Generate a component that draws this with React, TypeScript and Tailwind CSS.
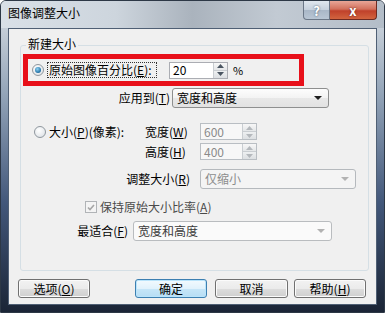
import type { ReactNode } from 'react';
import clsx from 'clsx';

const font = { fontFamily: '"Noto Sans CJK SC", "Noto Sans", sans-serif' };

function Spinner({ disabled }: { disabled?: boolean }) {
  const fill = disabled ? '#b4b8bc' : '#4a5561';
  return (
    <div className="flex h-full w-[14px] flex-col border-l border-[#c9cdd1]">
      <div className="flex flex-1 items-center justify-center border-b border-[#c9cdd1] bg-[linear-gradient(#f7f7f7,#e4e6e8)]">
        <svg width="7" height="4" viewBox="0 0 7 4">
          <path d="M0 4L3.5 0L7 4Z" fill={fill} />
        </svg>
      </div>
      <div className="flex flex-1 items-center justify-center bg-[linear-gradient(#eef0f1,#dcdfe2)]">
        <svg width="7" height="4" viewBox="0 0 7 4">
          <path d="M0 0L3.5 4L7 0Z" fill={fill} />
        </svg>
      </div>
    </div>
  );
}

function NumberBox({ value, disabled, width }: { value: string; disabled?: boolean; width: number }) {
  return (
    <div
      className={clsx(
        'flex h-[17px] border',
        disabled ? 'border-[#b9bec3] bg-[#f7f7f7] text-[#8a8a8a]' : 'border-[#abadb3] bg-white text-black'
      )}
      style={{ width }}
    >
      <div className="flex flex-1 items-center pl-[3px] text-[12px] leading-none">{value}</div>
      <Spinner disabled={disabled} />
    </div>
  );
}

function Combo({ text, width, disabled, dim }: { text: string; width: number; disabled?: boolean; dim?: boolean }) {
  return (
    <div
      className={clsx(
        'flex h-[20px] items-center justify-between rounded-[3px] border pl-[4px] pr-[6px] text-[12px] leading-none',
        disabled
          ? 'border-[#b5b9bd] bg-[#f4f4f4] text-[#8c8c8c]'
          : dim
            ? 'border-[#b9bcbf] bg-[#fafafa] text-[#3a3a3a]'
            : 'border-[#8e8f8f] bg-[linear-gradient(#fdfdfd_0%,#f3f3f3_50%,#e8e8e8_51%,#e2e2e2_100%)] text-black'
      )}
      style={{ width }}
    >
      <span>{text}</span>
      <svg width="8" height="4" viewBox="0 0 8 4">
        <path d="M0 0L4 4L8 0Z" fill={disabled || dim ? '#b2b2b2' : '#1e1e1e'} />
      </svg>
    </div>
  );
}

function Radio({ checked }: { checked?: boolean }) {
  return (
    <div className="flex h-[12px] w-[12px] items-center justify-center rounded-full border border-[#8f979e] bg-[radial-gradient(circle_at_40%_35%,#ffffff,#d8dde2)]">
      {checked && (
        <div className="h-[6px] w-[6px] rounded-full bg-[radial-gradient(circle_at_40%_35%,#8fd3f5,#1f6fa3_70%,#0d4a78)]" />
      )}
    </div>
  );
}

function Key({ k }: { k: string }) {
  return (
    <>
      (<span className="underline">{k}</span>)
    </>
  );
}

function Button({ children, primary, width }: { children: ReactNode; primary?: boolean; width: number }) {
  return (
    <div
      className={clsx(
        'flex h-[19px] items-center justify-center rounded-[3px] border text-[12px] leading-none text-black',
        primary
          ? 'border-[#3c7fb1] bg-[linear-gradient(#f2fafe_0%,#e1f2fc_50%,#c6e6f8_51%,#b7ddf4_100%)] shadow-[inset_0_0_0_1px_#b9e4fb]'
          : 'border-[#707070] bg-[linear-gradient(#f2f2f2_0%,#ebebeb_50%,#dddddd_51%,#cfcfcf_100%)] shadow-[inset_0_0_0_1px_#fbfbfb]'
      )}
      style={{ width }}
    >
      {children}
    </div>
  );
}

export default function App() {
  return (
    <div
      className="flex h-[313px] w-[385px] flex-col overflow-hidden rounded-t-[6px] border border-[#2d3846] bg-[linear-gradient(180deg,#dbe2e9_0%,#c4cdd7_9%,#93a4b8_30%,#42577a_65%,#1b2536_100%)]"
      style={font}
    >
      {/* title bar */}
      <div className="flex h-[27px] items-start justify-between bg-[linear-gradient(90deg,#d9e0e7_0%,#cdd5dd_30%,#aab3bd_50%,#c2cad3_72%,#b3bdc8_100%)]">
        <div className="pl-[7px] pt-[6px] text-[12px] leading-none text-black">图像调整大小</div>
        <div className="mr-[7px] flex h-[19px]">
          <div className="flex w-[27px] items-center justify-center rounded-bl-[4px] border border-t-0 border-[#6b7787] bg-[linear-gradient(#dfe6ee_0%,#c5d0dc_50%,#a9b7c7_51%,#b9c6d4_100%)] text-[13px] font-bold leading-none text-white [text-shadow:0_0_2px_#3b4b5e]">
            ?
          </div>
          <div className="flex w-[47px] items-center justify-center rounded-br-[4px] border border-l-0 border-t-0 border-[#6d2a22] bg-[linear-gradient(#e8a697_0%,#d2705c_45%,#c0412b_55%,#d2643f_100%)] text-[13px] font-bold leading-none text-white [text-shadow:0_0_2px_#5b1a10]">
            x
          </div>
        </div>
      </div>

      {/* client area */}
      <div className="mx-[7px] h-[277px] border border-[#4f5f74] bg-[#f0f0f0] text-[12px] leading-none text-black">
        {/* group box */}
        <div className="relative ml-[11px] mt-[16px] h-[226px] w-[349px] rounded-[3px] border border-[#d5dfe5]">
          <span className="absolute left-[5px] top-[-8px] bg-[#f0f0f0] px-[2px] text-[12px] leading-none">新建大小</span>

          {/* row 1 */}
          <div className="ml-[2px] mt-[8px] flex h-[32px] w-[281px] items-center border-[5px] border-[#e8101a]">
            <div className="ml-[4px]">
              <Radio checked />
            </div>
            <div className="ml-[3px] flex h-[16px] w-[110px] items-center border border-dotted border-[#333] pl-[1px]">
              原始图像百分比<Key k="E" />:
            </div>
            <div className="ml-[12px]">
              <NumberBox value="20" width={59} />
            </div>
            <span className="ml-[5px] text-[11px]">%</span>
          </div>

          {/* row 2 */}
          <div className="mt-[2px] flex items-center">
            <div className="w-[149px] text-right">
              应用到<Key k="T" />
            </div>
            <div className="ml-[2px]">
              <Combo text="宽度和高度" width={157} />
            </div>
          </div>

          {/* row 3 */}
          <div className="mt-[15px] flex items-center">
            <div className="ml-[13px]">
              <Radio />
            </div>
            <div className="ml-[3px] w-[96px]">
              大小<Key k="P" />(像素):
            </div>
            <div className="w-[55px]">
              宽度<Key k="W" />
            </div>
            <NumberBox value="600" disabled width={57} />
          </div>

          {/* row 4 */}
          <div className="mt-[3px] flex items-center">
            <div className="ml-[124px] w-[55px]">
              高度<Key k="H" />
            </div>
            <NumberBox value="400" disabled width={57} />
          </div>

          {/* row 5 */}
          <div className="mt-[9px] flex items-center">
            <div className="w-[169px] text-right">
              调整大小<Key k="R" />
            </div>
            <div className="ml-[10px]">
              <Combo text="仅缩小" width={156} disabled />
            </div>
          </div>

          {/* row 6 */}
          <div className="mt-[12px] flex items-center">
            <div className="ml-[64px] flex h-[12px] w-[12px] items-center justify-center border border-[#b1b4b7] bg-[#f4f4f4]">
              <svg width="8" height="7" viewBox="0 0 8 7">
                <path d="M1 3.5L3 5.5L7 1" stroke="#a6a6a6" strokeWidth="1.6" fill="none" />
              </svg>
            </div>
            <div className="ml-[3px] text-[#4a4a4a]">
              保持原始大小比率<Key k="A" />
            </div>
          </div>

          {/* row 7 */}
          <div className="mt-[8px] flex items-center">
            <div className="w-[107px] text-right">
              最适合<Key k="F" />
            </div>
            <div className="ml-[5px]">
              <Combo text="宽度和高度" width={199} dim />
            </div>
          </div>
        </div>

        {/* buttons */}
        <div className="mt-[8px] flex">
          <div className="ml-[9px]">
            <Button width={72}>
              选项<Key k="O" />
            </Button>
          </div>
          <div className="ml-[45px]">
            <Button width={72} primary>
              确定
            </Button>
          </div>
          <div className="ml-[8px]">
            <Button width={73}>取消</Button>
          </div>
          <div className="ml-[6px]">
            <Button width={72}>
              帮助<Key k="H" />
            </Button>
          </div>
        </div>
      </div>
    </div>
  );
}
